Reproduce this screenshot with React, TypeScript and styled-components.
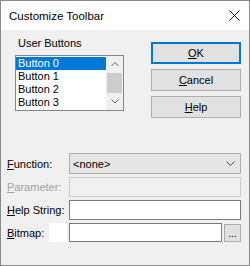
import React from 'react';
import styled, { createGlobalStyle } from 'styled-components';

const GlobalStyle = createGlobalStyle`
  html, body {
    margin: 0;
    padding: 0;
    background: #f0f0f0;
  }
  * {
    box-sizing: border-box;
  }
`;

const Window = styled.div`
  width: 250px;
  height: 266px;
  border: 1px solid #8a8a8a;
  background: #f0f0f0;
  display: flex;
  flex-direction: column;
  font-family: 'Liberation Sans', Arial, sans-serif;
  font-size: 11px;
  color: #000;
  overflow: hidden;
`;

const TitleBar = styled.div`
  height: 29px;
  flex: none;
  background: #fff;
  display: flex;
  align-items: center;
  justify-content: space-between;
  padding: 0 9px 0 8px;
  font-size: 11.5px;
`;

const Content = styled.div`
  flex: 1;
  display: flex;
  flex-direction: column;
  padding: 7px 8px 0 6px;
`;

const TopSection = styled.div`
  display: flex;
  align-items: flex-start;
`;

const ListGroup = styled.div`
  margin-left: 8px;
  width: 110px;
  display: flex;
  flex-direction: column;
`;

const GroupLabel = styled.div`
  line-height: 13px;
  padding-left: 3px;
  margin-bottom: 5px;
`;

const ListBox = styled.div`
  height: 56px;
  border: 1px solid #828790;
  background: #fff;
  display: flex;
`;

const Items = styled.div`
  flex: 1;
  padding-top: 1px;
`;

const Item = styled.div<{ $selected?: boolean }>`
  height: 13px;
  line-height: 13px;
  padding-left: 2px;
  background: ${({ $selected }) => ($selected ? '#0078d7' : 'transparent')};
  color: ${({ $selected }) => ($selected ? '#fff' : '#000')};
  white-space: nowrap;
`;

const ScrollBar = styled.div`
  width: 17px;
  background: #f0f0f0;
  display: flex;
  flex-direction: column;
`;

const ScrollArrow = styled.div`
  height: 17px;
  display: flex;
  align-items: center;
  justify-content: center;
`;

const Thumb = styled.div`
  flex: 1;
  margin: 0 1px;
  background: #cdcdcd;
`;

const ButtonColumn = styled.div`
  margin-left: 27px;
  margin-top: 5px;
  display: flex;
  flex-direction: column;
  gap: 5px;
`;

const DialogButton = styled.div<{ $default?: boolean }>`
  width: 90px;
  height: 22px;
  display: flex;
  align-items: center;
  justify-content: center;
  background: #e1e1e1;
  border: ${({ $default }) => ($default ? '2px solid #0078d7' : '1px solid #adadad')};
`;

const Form = styled.div`
  margin-top: 35px;
  display: flex;
  flex-direction: column;
  gap: 3px;
`;

const FormRow = styled.div<{ $h: number }>`
  display: flex;
  align-items: center;
  height: ${({ $h }) => $h}px;
`;

const Label = styled.div<{ $disabled?: boolean }>`
  width: 62px;
  flex: none;
  color: ${({ $disabled }) => ($disabled ? '#a0a0a0' : '#000')};
  white-space: nowrap;
`;

const Select = styled.div`
  width: 172px;
  height: 100%;
  background: #e5e5e5;
  border: 1px solid #adadad;
  display: flex;
  align-items: center;
  justify-content: space-between;
  padding: 0 5px 0 3px;
`;

const Field = styled.div<{ $disabled?: boolean; $w?: number }>`
  width: ${({ $w }) => $w ?? 172}px;
  height: 100%;
  background: ${({ $disabled }) => ($disabled ? '#f0f0f0' : '#fff')};
  border: 1px solid ${({ $disabled }) => ($disabled ? '#cccccc' : '#7a7a7a')};
`;

const BitmapLabel = styled(Label)`
  width: 42px;
`;

const Preview = styled.div`
  width: 18px;
  height: 100%;
  background: #fff;
  margin-right: 2px;
`;

const BrowseButton = styled.div`
  width: 17px;
  height: 18px;
  margin-left: 2px;
  align-self: flex-end;
  background: #e1e1e1;
  border: 1px solid #adadad;
  display: flex;
  align-items: flex-end;
  justify-content: center;
  padding-bottom: 3px;
  line-height: 8px;
  font-size: 10px;
`;

const Chevron: React.FC<{ up?: boolean; w?: number; color?: string }> = ({ up, w = 7, color = '#606060' }) => (
  <svg width={w + 1} height={Math.ceil(w / 2) + 1} viewBox={`0 0 ${w + 1} ${Math.ceil(w / 2) + 1}`}>
    <polyline
      points={
        up
          ? `0.5,${w / 2 + 0.5} ${(w + 1) / 2},0.5 ${w + 0.5},${w / 2 + 0.5}`
          : `0.5,0.5 ${(w + 1) / 2},${w / 2 + 0.5} ${w + 0.5},0.5`
      }
      fill="none"
      stroke={color}
      strokeWidth="1"
    />
  </svg>
);

const App: React.FC = () => {
  const buttons = ['Button 0', 'Button 1', 'Button 2', 'Button 3'];

  return (
    <>
      <GlobalStyle />
      <Window>
        <TitleBar>
          <span>Customize Toolbar</span>
          <svg width="11" height="11" viewBox="0 0 11 11">
            <path d="M0.5 0.5 L10.5 10.5 M10.5 0.5 L0.5 10.5" stroke="#111" strokeWidth="1" />
          </svg>
        </TitleBar>
        <Content>
          <TopSection>
            <ListGroup>
              <GroupLabel>User Buttons</GroupLabel>
              <ListBox>
                <Items>
                  {buttons.map((b, i) => (
                    <Item key={b} $selected={i === 0}>
                      {b}
                    </Item>
                  ))}
                </Items>
                <ScrollBar>
                  <ScrollArrow>
                    <Chevron up />
                  </ScrollArrow>
                  <Thumb />
                  <ScrollArrow>
                    <Chevron />
                  </ScrollArrow>
                </ScrollBar>
              </ListBox>
            </ListGroup>
            <ButtonColumn>
              <DialogButton $default>
                <span><u>O</u>K</span>
              </DialogButton>
              <DialogButton>
                <span><u>C</u>ancel</span>
              </DialogButton>
              <DialogButton>
                <span><u>H</u>elp</span>
              </DialogButton>
            </ButtonColumn>
          </TopSection>
          <Form>
            <FormRow $h={21}>
              <Label><u>F</u>unction:</Label>
              <Select>
                <span>&lt;none&gt;</span>
                <Chevron w={8} color="#444" />
              </Select>
            </FormRow>
            <FormRow $h={20}>
              <Label $disabled><u>P</u>arameter:</Label>
              <Field $disabled />
            </FormRow>
            <FormRow $h={20}>
              <Label><u>H</u>elp String:</Label>
              <Field />
            </FormRow>
            <FormRow $h={19}>
              <BitmapLabel><u>B</u>itmap:</BitmapLabel>
              <Preview />
              <Field $w={153} />
              <BrowseButton>...</BrowseButton>
            </FormRow>
          </Form>
        </Content>
      </Window>
    </>
  );
};

export default App;
